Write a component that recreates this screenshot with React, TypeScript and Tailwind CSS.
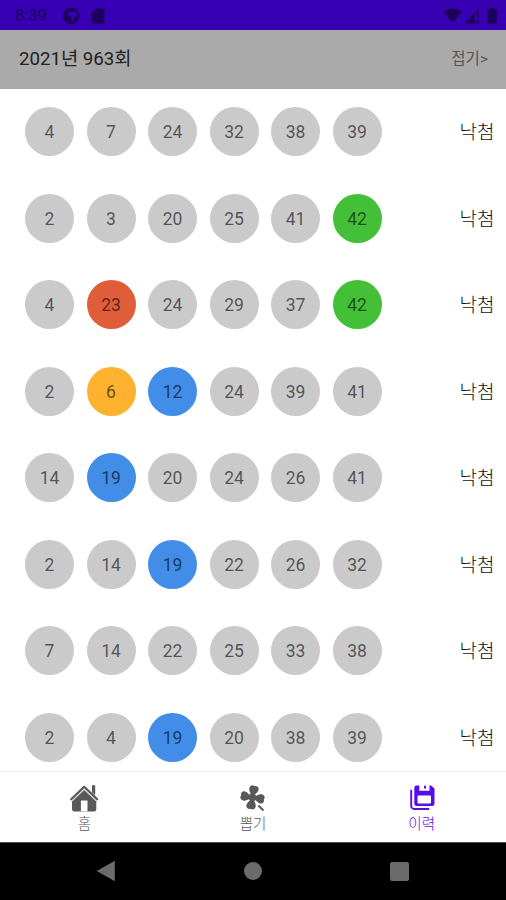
import React from 'react';

type Ball = { n: number; color?: string };

const GREEN = 'bg-[#43c038]';
const RED = 'bg-[#df5d39]';
const YELLOW = 'bg-[#fdb22f]';
const BLUE = 'bg-[#418de8]';

const games: Ball[][] = [
    [{ n: 4 }, { n: 7 }, { n: 24 }, { n: 32 }, { n: 38 }, { n: 39 }],
    [{ n: 2 }, { n: 3 }, { n: 20 }, { n: 25 }, { n: 41 }, { n: 42, color: GREEN }],
    [{ n: 4 }, { n: 23, color: RED }, { n: 24 }, { n: 29 }, { n: 37 }, { n: 42, color: GREEN }],
    [{ n: 2 }, { n: 6, color: YELLOW }, { n: 12, color: BLUE }, { n: 24 }, { n: 39 }, { n: 41 }],
    [{ n: 14 }, { n: 19, color: BLUE }, { n: 20 }, { n: 24 }, { n: 26 }, { n: 41 }],
    [{ n: 2 }, { n: 14 }, { n: 19, color: BLUE }, { n: 22 }, { n: 26 }, { n: 32 }],
    [{ n: 7 }, { n: 14 }, { n: 22 }, { n: 25 }, { n: 33 }, { n: 38 }],
    [{ n: 2 }, { n: 4 }, { n: 19, color: BLUE }, { n: 20 }, { n: 38 }, { n: 39 }],
];

const StatusBar = () => (
    <div className="flex h-[30px] shrink-0 items-center bg-[#3700b3] pl-[15px] pr-[9px] pt-px text-[#1c005a]">
        <span className="w-[47px] pt-[2px] text-[16.5px] leading-none">8:39</span>
        <svg className="h-[18px] w-[18px]" viewBox="0 0 18 18">
            <circle cx="9" cy="9" r="8.2" fill="currentColor" />
            <path d="M6.2 5h9v5.6h-3.6v3.6H6.2z" fill="#3700b3" />
            <path d="M6.200 8.800h3v5.600h-3z" fill="currentColor" />
        </svg>
        <svg className="ml-[11px] h-[16px] w-[14px]" viewBox="0 0 14 16">
            <path d="M5 .5h7a1.4 1.4 0 0 1 1.4 1.4v12.2a1.4 1.4 0 0 1-1.4 1.4H2A1.4 1.4 0 0 1 .6 14V5z" fill="currentColor" />
            <path d="M5.500 2.500v2.600M8 2.500v2.600M10.500 2.500v2.600" stroke="#3700b3" strokeWidth=".7" opacity=".6" />
        </svg>
        <svg className="ml-auto h-[15px] w-[19px]" viewBox="0 0 19 15">
            <path d="M.3 3.600C5.800-.4 13.200-.4 18.700 3.600L9.500 14.800z" fill="currentColor" />
        </svg>
        <svg className="ml-[2px] h-[16px] w-[15px]" viewBox="0 0 15 16">
            <path d="M.3 15.500 14.700.8V15.500z" fill="currentColor" />
            <path d="M10.800 6.300 13.300 3.800V14H10.800z" fill="#3700b3" />
        </svg>
        <svg className="ml-[8px] h-[17px] w-[10px]" viewBox="0 0 10 17">
            <path d="M3 .5h4v1.700h1.700a1.100 1.100 0 0 1 1.100 1.100v12a1.100 1.100 0 0 1-1.100 1.100H1.300a1.100 1.100 0 0 1-1.100-1.100v-12a1.100 1.100 0 0 1 1.100-1.100H3z" fill="currentColor" />
        </svg>
    </div>
);

const GameRow = ({ balls }: { balls: Ball[] }) => (
    <div className="flex h-[86.5px] shrink-0 items-center justify-between pl-[25px] pr-[11.5px]">
        <div className="flex gap-[12.5px]">
            {balls.map(({ n, color }) => (
                <div
                    key={n}
                    className={`flex h-[49px] w-[49px] items-center justify-center rounded-full pt-[2px] text-[17.5px] leading-none text-black/60 ${color ?? 'bg-[#cacaca]'}`}
                >
                    {n}
                </div>
            ))}
        </div>
        <span className="pt-[2px] text-[19px] leading-none font-light text-[#111]">낙첨</span>
    </div>
);

const HomeIcon = () => (
    <svg className="h-[28px] w-[30px]" viewBox="0 0 30 28" fill="currentColor">
        <path d="M23 1.200h3.200v10L23 8.200z" />
        <path d="M15 5.500 27.300 17V25.200a2.200 2.200 0 0 1-2.200 2.200H5.200A2.200 2.200 0 0 1 3 25.200V17z" />
        <path d="M2.500 17.300 15.200 5.300l12.700 12" fill="none" stroke="#d5d5d5" strokeWidth="1.400" />
        <path d="M2.200 15.200 15.200 2.800l13 12.400" fill="none" stroke="currentColor" strokeWidth="2.200" strokeLinecap="round" strokeLinejoin="round" />
        <path d="M11.900 16.500h6.600v10.900h-6.600z" fill="#fff" />
    </svg>
);

const leaf = 'M13 13.500C12 10.500 8.500 8.500 8.500 5 8.500 2.200 11 .8 13.200 2 15.600.8 18 2.200 17.800 5 17.600 8.300 14.200 10.500 14 13.500z';

const CloverIcon = () => (
    <svg className="h-[28px] w-[28px]" viewBox="0 0 28 28" fill="currentColor">
        <g transform="rotate(12 13.800 13.500)">
            <path d={leaf} />
            <path d={leaf} transform="rotate(90 13.500 13.500)" />
            <path d={leaf} transform="rotate(180 13.500 13.500)" />
            <path d={leaf} transform="rotate(270 13.500 13.500)" />
            <circle cx="13.500" cy="13.500" r="3.800" />
        </g>
        <path d="m19.300 21.500 5.200 5" stroke="currentColor" strokeWidth="2" />
    </svg>
);

const SaveIcon = () => (
    <svg className="h-[28px] w-[28px]" viewBox="0 0 28 28">
        <path d="M3.200 6.500V22a3 3 0 0 0 3 3H20.500" fill="none" stroke="currentColor" strokeWidth="1.900" strokeLinecap="round" />
        <path d="M8.500 1.500h2.800v5.300h10.200V1.500h1.500l3.500 3v15.200a2.200 2.200 0 0 1-2.200 2.200H8.500a2.200 2.200 0 0 1-2.200-2.200V3.700a2.200 2.200 0 0 1 2.200-2.200z" fill="currentColor" />
        <path d="M17 1.800v2.600" stroke="currentColor" strokeWidth="2" />
        <rect x="9.500" y="11.500" width="13.500" height="8" rx="1" fill="#fff" />
    </svg>
);

const tabs = [
    { label: '홈', icon: <HomeIcon />, active: false },
    { label: '뽑기', icon: <CloverIcon />, active: false },
    { label: '이력', icon: <SaveIcon />, active: true },
];

export default function App() {
    return (
        <div className="flex h-[900px] w-[506px] flex-col overflow-hidden bg-white font-[Roboto,'Noto_Sans_CJK_KR',sans-serif]">
            <StatusBar />

            <header className="flex h-[58.5px] shrink-0 items-center justify-between bg-[#aaaaaa] pl-[19px] pr-[18px]">
                <h1 className="text-[18.7px] leading-none text-[#222]">2021년 963회</h1>
                <button className="pt-px text-[15.5px] leading-none text-[#555]">접기&gt;</button>
            </header>

            <main className="flex min-h-0 flex-1 flex-col overflow-hidden">
                {games.map((balls, i) => (
                    <GameRow key={i} balls={balls} />
                ))}
            </main>

            {/* Bottom tabs */}
            <nav className="grid h-[71px] shrink-0 grid-cols-3 border-t border-[#f0f0f0] bg-white">
                {tabs.map(({ label, icon, active }) => (
                    <button
                        key={label}
                        className={`flex flex-col items-center pt-[12px] ${active ? 'text-[#5a0bea]' : 'text-[#585858]'}`}
                    >
                        {icon}
                        <span className="mt-[6px] text-[14.5px] leading-none font-light">{label}</span>
                    </button>
                ))}
            </nav>

            {/* System navigation */}
            <div className="flex h-[58px] shrink-0 items-center justify-between border-t border-[#555] bg-black pb-px pl-[96px] pr-[97px]">
                <svg className="h-[22px] w-[20px]" viewBox="0 0 20 22">
                    <path d="M.8 11 18.800.8v20.400z" fill="#6b6b6b" />
                </svg>
                <div className="h-[18px] w-[18px] rounded-full bg-[#6b6b6b]" />
                <div className="h-[19px] w-[19px] rounded-xs bg-[#6b6b6b]" />
            </div>
        </div>
    );
}
